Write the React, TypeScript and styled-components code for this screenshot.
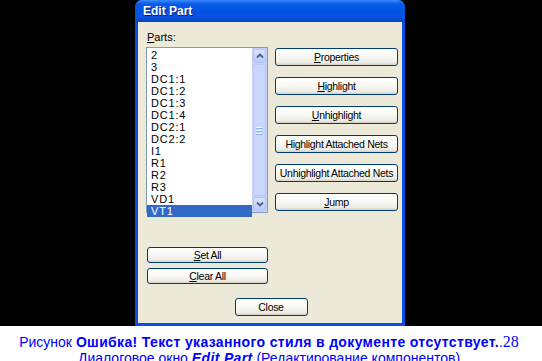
import React from "react";
import styled, { createGlobalStyle } from "styled-components";

const Global = createGlobalStyle`
  html, body { margin: 0; padding: 0; background: #ffffff; }
  body { width: 542px; height: 361px; overflow: hidden; font-family: "Liberation Sans", Arial, sans-serif; }
`;

const Page = styled.div`
  display: flex;
  flex-direction: column;
  width: 542px;
`;

const Stage = styled.div`
  background: #000000;
  height: 326px;
  display: flex;
  justify-content: center;
`;

const Window = styled.div`
  width: 270px;
  height: 326px;
  display: flex;
  flex-direction: column;
  background: #0a4fe0;
  border-radius: 7px 7px 0 0;
  margin-left: -2px;
`;

const TitleBar = styled.div`
  height: 22px;
  flex: none;
  display: flex;
  align-items: center;
  padding-left: 8px;
  border-radius: 7px 7px 0 0;
  background: linear-gradient(180deg, #3a8cff 0%, #0a5ae8 18%, #0054e3 50%, #0a52dc 80%, #0045c8 100%);
  color: #ffffff;
  font-family: "Liberation Sans", Arial, sans-serif;
  font-weight: bold;
  font-size: 12px;
  text-shadow: 1px 1px 0 #0a1e80;
`;

const Client = styled.div`
  flex: 1;
  margin: 0 3px 3px 3px;
  background: #ece9d8;
  display: flex;
  flex-direction: column;
  padding: 9px 0 0 8px;
  font-family: "Liberation Sans", Arial, sans-serif;
  font-size: 11px;
  color: #000;
`;

const Columns = styled.div`
  display: grid;
  grid-template-columns: 122px 123px;
  column-gap: 7px;
`;

const LeftCol = styled.div`
  display: flex;
  flex-direction: column;
`;

const Label = styled.div`
  height: 16px;
  line-height: 12px;
  padding-left: 1px;
`;

const ListBox = styled.div`
  height: 166px;
  border: 1px solid #7f9db9;
  background: #ffffff;
  box-sizing: border-box;
  display: flex;
`;

const Items = styled.div`
  flex: 1;
  display: flex;
  flex-direction: column;
  padding-top: 1px;
`;

const Item = styled.div<{ $sel?: boolean }>`
  height: 12.1px;
  line-height: 12px;
  padding-left: 4px;
  font-size: 11px;
  letter-spacing: 0.8px;
  background: ${(p) => (p.$sel ? "#316ac5" : "transparent")};
  color: ${(p) => (p.$sel ? "#ffffff" : "#000000")};
`;

const ScrollBar = styled.div`
  width: 15px;
  display: flex;
  flex-direction: column;
  background: #c4d2f8;
`;

const ScrollBtn = styled.div`
  height: 14px;
  margin: 1px;
  border-radius: 2px;
  background: linear-gradient(180deg, #d7e2fd, #b8cbf6);
  border: 1px solid #b3c6f2;
  box-sizing: border-box;
  display: flex;
  align-items: center;
  justify-content: center;
`;

const Thumb = styled.div`
  flex: 1;
  margin: 0 1px;
  border-radius: 2px;
  background: #c8d7fb;
  border: 1px solid #b7c9f4;
  display: flex;
  flex-direction: column;
  align-items: center;
  justify-content: center;
  gap: 2px;
`;

const Grip = styled.div`
  width: 7px;
  height: 1px;
  background: #eef4fe;
  box-shadow: 0 1px 0 #8cb0f8;
`;

const RightCol = styled.div`
  display: flex;
  flex-direction: column;
  gap: 11px;
  padding-top: 17px;
`;

const Button = styled.div<{ $h?: number; $w?: number }>`
  height: ${(p) => p.$h ?? 18}px;
  ${(p) => (p.$w ? `width: ${p.$w}px;` : "")}
  box-sizing: border-box;
  border: 1px solid #003c74;
  border-radius: 3px;
  background: linear-gradient(180deg, #ffffff 0%, #f8f8f4 50%, #ecebe4 85%, #d6d0c5 100%);
  display: flex;
  align-items: center;
  justify-content: center;
  font-size: 10.5px;
  letter-spacing: -0.3px;
  white-space: nowrap;
  color: #000;
`;

const U = styled.span`
  text-decoration: underline;
`;

const BottomButtons = styled.div`
  display: flex;
  flex-direction: column;
  gap: 5px;
  margin-top: 34px;
  padding-left: 1px;
`;

const CloseRow = styled.div`
  display: flex;
  justify-content: center;
  margin-top: 14px;
  padding-right: 6px;
`;

const Caption = styled.div`
  color: #0000ff;
  font-family: "Liberation Sans", Arial, sans-serif;
  font-size: 14px;
  line-height: 16px;
  text-align: center;
  padding-top: 8px;
  padding-right: 4px;
`;

const Line = styled.div`
  white-space: nowrap;
`;

const Strong = styled.b`
  letter-spacing: 0.35px;
`;

const Num = styled.span`
  font-family: "Liberation Serif", "Times New Roman", serif;
  font-size: 16px;
`;

const items = ["2", "3", "DC1:1", "DC1:2", "DC1:3", "DC1:4", "DC2:1", "DC2:2", "I1", "R1", "R2", "R3", "VD1", "VT1"];

const Chevron = ({ up }: { up?: boolean }) => (
  <svg width="8" height="6" viewBox="0 0 8 6">
    <path
      d={up ? "M1 4.5 L4 1.5 L7 4.5" : "M1 1.5 L4 4.5 L7 1.5"}
      stroke="#4d6185"
      strokeWidth="1.8"
      fill="none"
    />
  </svg>
);

export default function App() {
  return (
    <Page>
      <Global />
      <Stage>
        <Window>
          <TitleBar>Edit Part</TitleBar>
          <Client>
            <Columns>
              <LeftCol>
                <Label>
                  <U>P</U>arts:
                </Label>
                <ListBox>
                  <Items>
                    {items.map((t, i) => (
                      <Item key={t} $sel={i === items.length - 1}>
                        {t}
                      </Item>
                    ))}
                  </Items>
                  <ScrollBar>
                    <ScrollBtn>
                      <Chevron up />
                    </ScrollBtn>
                    <Thumb>
                      <Grip />
                      <Grip />
                      <Grip />
                    </Thumb>
                    <ScrollBtn>
                      <Chevron />
                    </ScrollBtn>
                  </ScrollBar>
                </ListBox>
                <BottomButtons>
                  <Button $h={16}>
                    <U>S</U>et All
                  </Button>
                  <Button $h={16}>
                    <U>C</U>lear All
                  </Button>
                </BottomButtons>
              </LeftCol>
              <RightCol>
                <Button>
                  <U>P</U>roperties
                </Button>
                <Button>
                  <U>H</U>ighlight
                </Button>
                <Button>
                  <U>U</U>nhighlight
                </Button>
                <Button>Highlight Attached Nets</Button>
                <Button>Unhighlight Attached Nets</Button>
                <Button>
                  <U>J</U>ump
                </Button>
              </RightCol>
            </Columns>
            <CloseRow>
              <Button $w={73}>Close</Button>
            </CloseRow>
          </Client>
        </Window>
      </Stage>
      <Caption>
        <Line>
          Рисунок <Strong>Ошибка! Текст указанного стиля в документе отсутствует.</Strong>.<Num>28</Num>
        </Line>
        <Line>
          Диалоговое окно <Strong><i>Edit Part</i></Strong> (Редактирование компонентов)
        </Line>
      </Caption>
    </Page>
  );
}
